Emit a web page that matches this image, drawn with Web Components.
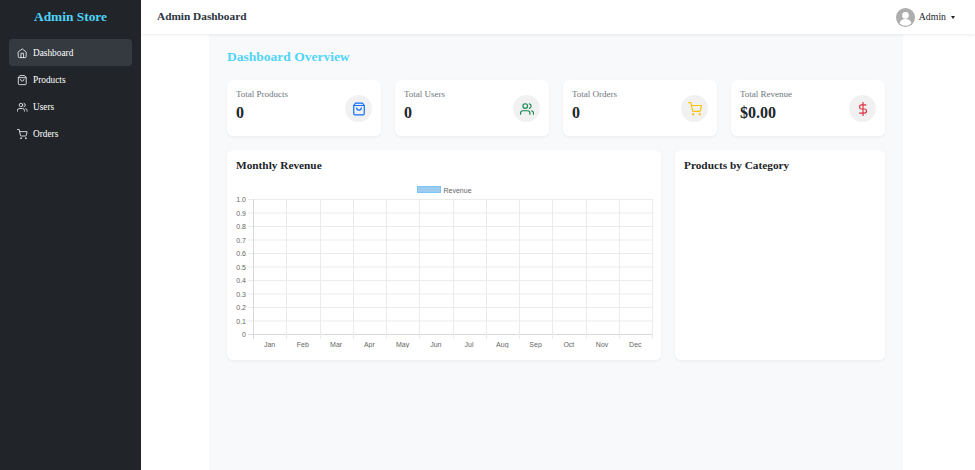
<!DOCTYPE html>
<html><head><meta charset="utf-8"><style>
html,body{margin:0;height:100%;overflow:hidden;background:#fff;font-family:"Liberation Serif",serif}
</style></head><body>
<admin-app>
  <admin-sidebar slot="side" brand="Admin Store">
    <nav-item icon="house" active>Dashboard</nav-item>
    <nav-item icon="bag">Products</nav-item>
    <nav-item icon="people">Users</nav-item>
    <nav-item icon="cart">Orders</nav-item>
  </admin-sidebar>
  <admin-topbar slot="top" title="Admin Dashboard" user="Admin"></admin-topbar>
  <h2 slot="title" style="margin:0;font:700 13.5px/20px 'Liberation Serif',serif;color:#50d4fa">Dashboard Overview</h2>
  <stat-card slot="stats" label="Total Products" value="0" icon="bag" color="#0d6efd"></stat-card>
  <stat-card slot="stats" label="Total Users" value="0" icon="people" color="#198754"></stat-card>
  <stat-card slot="stats" label="Total Orders" value="0" icon="cart" color="#ffc107"></stat-card>
  <stat-card slot="stats" label="Total Revenue" value="$0.00" icon="dollar" color="#dc3545"></stat-card>
  <chart-card slot="charts" title="Monthly Revenue"><revenue-chart></revenue-chart></chart-card>
  <chart-card slot="charts" title="Products by Category"></chart-card>
</admin-app>
<script>
const ICONS={
 house:'<path d="M3 9l9-7 9 7v11a2 2 0 0 1-2 2H5a2 2 0 0 1-2-2z"/><path d="M9 22V12h6v10"/>',
 bag:'<path d="M6 2L3 6v14a2 2 0 0 0 2 2h14a2 2 0 0 0 2-2V6l-3-4z"/><path d="M3 6h18"/><path d="M16 10a4 4 0 0 1-8 0"/>',
 people:'<path d="M17 21v-2a4 4 0 0 0-4-4H5a4 4 0 0 0-4 4v2"/><circle cx="9" cy="7" r="4"/><path d="M23 21v-2a4 4 0 0 0-3-3.870"/><path d="M16 3.130a4 4 0 0 1 0 7.750"/>',
 cart:'<circle cx="9" cy="21" r="1"/><circle cx="20" cy="21" r="1"/><path d="M1 1h4l2.680 13.390a2 2 0 0 0 2 1.610h9.720a2 2 0 0 0 2-1.610L23 6H6"/>',
 dollar:'<path d="M12 1v22"/><path d="M17 5H9.500a3.500 3.500 0 0 0 0 7h5a3.500 3.500 0 0 1 0 7H6"/>'
};
const svgIcon=(n,s)=>`<svg xmlns="http://www.w3.org/2000/svg" width="${s}" height="${s}" viewBox="0 0 24 24" fill="none" stroke="currentColor" stroke-width="2" stroke-linecap="round" stroke-linejoin="round">${ICONS[n]}</svg>`;
class Base extends HTMLElement{
  constructor(){super();this.attachShadow({mode:'open'})}
  connectedCallback(){this.shadowRoot.innerHTML=this.render()}
}
customElements.define('admin-app',class extends Base{render(){return `<style>
:host{display:flex;width:975px;height:470px;overflow:hidden;font-family:"Liberation Serif",serif}
.side{width:141px;flex:none;display:flex}
.right{flex:1;display:flex;flex-direction:column;min-width:0}
.body{flex:1;display:flex;justify-content:flex-start;padding-left:68px}
main{width:694px;box-sizing:border-box;background:#f8f9fa;padding:13px 18px;display:flex;flex-direction:column}
.stats{display:grid;grid-template-columns:repeat(4,154px);column-gap:14px;margin-top:13px}
.charts{display:grid;grid-template-columns:434px 210px;column-gap:14px;margin-top:14px}
</style>
<div class="side"><slot name="side"></slot></div>
<div class="right"><slot name="top"></slot>
<div class="body"><main><slot name="title"></slot>
<div class="stats"><slot name="stats"></slot></div>
<div class="charts"><slot name="charts"></slot></div>
</main></div></div>`}});
customElements.define('admin-sidebar',class extends Base{render(){return `<style>
:host{display:flex;flex-direction:column;width:141px;background:#212529;color:#fff;box-sizing:border-box}
.brand{height:34px;display:flex;align-items:center;justify-content:center;font:700 13.4px/1 "Liberation Serif",serif;color:#50d4fa}
nav{display:flex;flex-direction:column;padding:5px 9px 0 9px}
</style><div class="brand">${this.getAttribute('brand')}</div><nav><slot></slot></nav>`}});
customElements.define('nav-item',class extends Base{render(){const a=this.hasAttribute('active');return `<style>
:host{display:flex;align-items:center;height:27px;box-sizing:border-box;padding:2px 0 0 8px;gap:5.5px;border-radius:4px;color:#fff;font:400 9.3px/1 "Liberation Serif",serif;${a?'background:#343a40;':''}}
svg{display:block;color:#e9ecef}
</style>${svgIcon(this.getAttribute('icon'),10.5)}<span><slot></slot></span>`}});
customElements.define('admin-topbar',class extends Base{render(){return `<style>
:host{display:flex;align-items:center;justify-content:space-between;height:34px;box-sizing:border-box;padding:0 20px 0 16px;background:#fff;box-shadow:0 1px 3px rgba(0,0,0,.08);position:relative;z-index:1}
.t{font:700 11.3px/1 "Liberation Serif",serif;color:#2b3440}
.u{display:flex;align-items:center;font:400 9.8px/1 "Liberation Serif",serif;color:#212529}
.c{margin-left:5px;width:0;height:0;border:2.5px solid transparent;border-top:3px solid #212529;border-bottom:0}
svg{display:block;margin-right:4px}
</style><div class="t">${this.getAttribute('title')}</div><div class="u">
<svg width="19" height="19" viewBox="0 0 19 19"><circle cx="9.500" cy="9.500" r="9.500" fill="#adadad"/><circle cx="9.500" cy="7.400" r="3.300" fill="#fff"/><path d="M3.600 15.200c.6-2.900 2.900-4.200 5.900-4.200s5.300 1.300 5.900 4.200a8 8 0 0 1-11.800 0z" fill="#fff"/></svg>
<span>${this.getAttribute('user')}</span><span class="c"></span></div>`}});
customElements.define('stat-card',class extends Base{render(){return `<style>
:host{display:flex;justify-content:space-between;height:56px;box-sizing:border-box;padding:9px;background:#fff;border-radius:6px;box-shadow:0 1px 3px rgba(0,0,0,.06)}
.l{font:400 9px/11px "Liberation Serif",serif;color:#6c757d}
.v{font:700 16px/18px "Liberation Serif",serif;color:#212529;margin-top:4px}
.i{width:27px;height:27px;border-radius:50%;background:#f1f1f1;display:flex;align-items:center;justify-content:center;align-self:flex-end;margin-bottom:5px;color:${this.getAttribute('color')}}
</style><div><div class="l">${this.getAttribute('label')}</div><div class="v">${this.getAttribute('value')}</div></div>
<div class="i">${svgIcon(this.getAttribute('icon'),14)}</div>`}});
customElements.define('chart-card',class extends Base{render(){return `<style>
:host{display:block;height:210px;box-sizing:border-box;padding:9px;background:#fff;border-radius:6px;box-shadow:0 1px 3px rgba(0,0,0,.06)}
h3{margin:0 0 1px;font:700 11.3px/13px "Liberation Serif",serif;color:#212529}
.s{margin:0 -9px}
</style><h3>${this.getAttribute('title')}</h3><div class="s"><slot></slot></div>`}});
customElements.define('revenue-chart',class extends Base{render(){
 const L=26,T=26,W=399,H=135,B=T+H; let g='',t='';
 const F='font-family="Liberation Sans" font-size="7" fill="#666"';
 for(let i=0;i<=10;i++){const y=T+i*13.5;
   g+=`<line x1="${L-5}" x2="${L+W}" y1="${y+.5}" y2="${y+.5}" stroke="${i==10?'#d8d8d8':'#ebebeb'}"/>`;
   t+=`<text x="${L-7}" y="${y+3}" text-anchor="end" ${F}>${i==10?'0':((10-i)/10).toFixed(1)}</text>`;}
 'Jan Feb Mar Apr May Jun Jul Aug Sep Oct Nov Dec'.split(' ').forEach((m,i)=>{const x=L+i*33.25;
   t+=`<text x="${x+16.6}" y="${B+13}" text-anchor="middle" ${F}>${m}</text>`;});
 for(let i=0;i<=12;i++){const x=Math.round(L+i*33.25);
   g+=`<line y1="${T}" y2="${B+5}" x1="${x+.5}" x2="${x+.5}" stroke="${i==0?'#d8d8d8':'#ebebeb'}"/>`;}
 return `<style>:host{display:block}svg{display:block}</style>
 <svg width="434" height="175" viewBox="0 0 434 175">
 <rect x="190.500" y="13.500" width="23" height="6" fill="#9ccdf0" stroke="#7cc4f5"/>
 <text x="216.500" y="19.500" ${F}>Revenue</text>${g}${t}</svg>`}});
</script></body></html>
